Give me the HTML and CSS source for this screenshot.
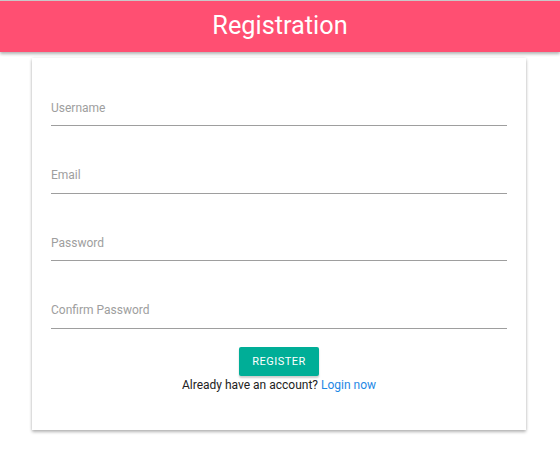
FILE: index.html
```html
<!DOCTYPE html>
<html>
<head>
<meta charset="utf-8">
<link rel="stylesheet" href="styles.css">
</head>
<body>
<header class="topbar"><h1 class="title">Registration</h1></header>
<main class="card">
  <form class="form">
    <div class="field"><label class="label">Username</label></div>
    <div class="field"><label class="label">Email</label></div>
    <div class="field"><label class="label">Password</label></div>
    <div class="field"><label class="label">Confirm Password</label></div>
    <div class="actions">
      <button type="button" class="btn">REGISTER</button>
      <p class="note">Already have an account? <a class="link" href="#">Login now</a></p>
    </div>
  </form>
</main>
</body>
</html>
```
FILE: styles.css
```css
html, body { margin: 0; padding: 0; background: #fff; }
body { font-family: Roboto, "Noto Sans", sans-serif; padding-bottom: 20px; }
.topbar {
  border-top: 1px solid #c8c8c8;
  height: 51px;
  background: #ff4f72;
  box-shadow: 0 2px 3px rgba(0,0,0,0.3);
  display: flex;
  align-items: center;
  justify-content: center;
}
.title {
  margin: 0 0 2px 0;
  color: #fff;
  font-weight: 400;
  font-size: 25.3px;
  line-height: 1;
}
.card {
  margin: 6px 0 0 32px;
  width: 494px;
  box-sizing: border-box;
  padding: 20px 19px 38px 19px;
  background: #fff;
  box-shadow: 0 2px 3px rgba(0,0,0,0.28), 0 0 3px rgba(0,0,0,0.08);
}
.form { display: flex; flex-direction: column; }
.field {
  height: 48px;
  border-bottom: 1px solid #9e9e9e;
  margin-bottom: 19.67px;
  display: flex;
  align-items: center;
  padding-top: 12px;
  box-sizing: border-box;
}
.label {
  color: #9e9e9e;
  font-size: 12px;
}
.actions {
  display: flex;
  flex-direction: column;
  align-items: center;
  margin-top: -2px;
}
.btn {
  width: 80px;
  height: 29px;
  border: none;
  border-radius: 2px;
  background: #00ae97;
  color: #fff;
  font-family: Roboto, sans-serif;
  font-size: 11px;
  letter-spacing: 0.5px;
  box-shadow: 0 2px 2px rgba(0,0,0,0.2);
  padding: 0;
}
.note {
  margin: 2px 0 0 0;
  font-size: 12px;
  color: #222;
}
.link { color: #1e88e5; text-decoration: none; }
```
